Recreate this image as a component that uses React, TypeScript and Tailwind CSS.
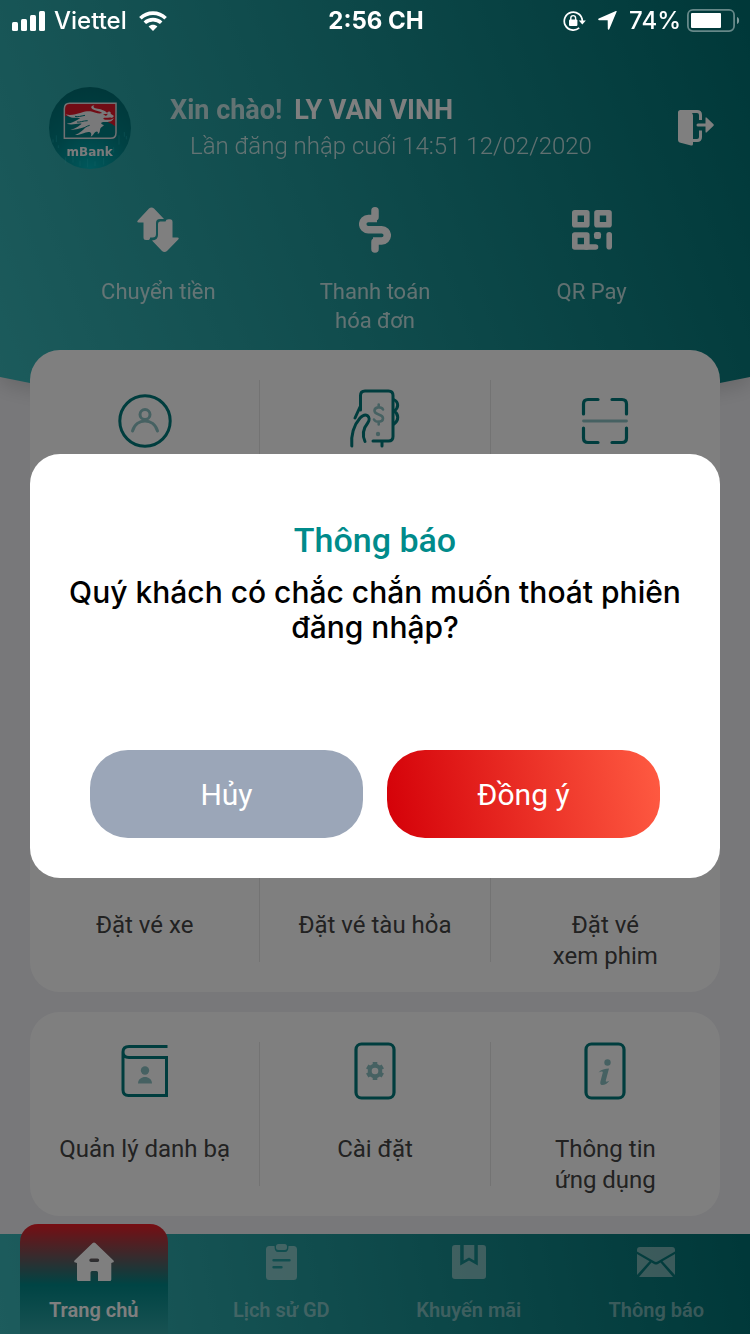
import type { ReactNode } from 'react';

function SignalIcon() {
  return (
    <svg width="34" height="20" viewBox="0 0 34 20" fill="white" aria-hidden="true">
      <rect x="0" y="11" width="6" height="9" rx="1.5" />
      <rect x="9" y="8" width="6" height="12" rx="1.5" />
      <rect x="18" y="4" width="6" height="16" rx="1.5" />
      <rect x="27" y="0" width="6" height="20" rx="1.5" />
    </svg>
  );
}

function WifiIcon() {
  return (
    <svg width="28" height="20" viewBox="0 0 28 20" fill="none" stroke="white" strokeWidth="3.6" aria-hidden="true">
      <path d="M1.4 7.2C8.4 .4 19.6 .4 26.6 7.2" />
      <path d="M5.8 11.8C10.4 7.5 17.6 7.5 22.2 11.8" />
      <path d="M14 20l-4.4-4.5c2.5-2.2 6.3-2.2 8.8 0z" fill="white" stroke="none" />
    </svg>
  );
}

function RotationLockIcon() {
  return (
    <svg width="23" height="20" viewBox="0 0 23 20" fill="none" stroke="white" aria-hidden="true">
      <path d="M19.3 10A9 9 0 1 0 16.2 16.9" strokeWidth="1.7" />
      <path d="M15.8 9.6h7l-3.5 4z" fill="white" stroke="none" />
      <rect x="6" y="8.6" width="8.4" height="6.4" rx="1" fill="white" stroke="none" />
      <path d="M7.8 9V7a2.4 2.4 0 0 1 4.8 0v2" strokeWidth="1.4" />
    </svg>
  );
}

function LocationIcon() {
  return (
    <svg width="19" height="19" viewBox="0 0 19 19" fill="white" aria-hidden="true">
      <path d="M18.6.8c.3-.6-.1-.9-.7-.7L.8 7.6c-.9.4-.7 1.6.3 1.6h8.2c.2 0 .4.2.4.4l.1 8.2c0 1 1.2 1.2 1.6.3z" />
    </svg>
  );
}

function BatteryIcon() {
  return (
    <svg width="53" height="23" viewBox="0 0 53 23" fill="none" aria-hidden="true">
      <rect x=".9" y=".9" width="46.2" height="21.2" rx="5" stroke="white" strokeOpacity=".4" strokeWidth="1.8" />
      <rect x="4" y="4" width="30" height="15" rx="1" fill="white" />
      <path d="M50 8c2.8.6 2.8 6.4 0 7z" fill="white" fillOpacity=".5" />
    </svg>
  );
}

function BankLogo() {
  return (
    <svg className="size-[82px] shrink-0" viewBox="12 15 246 246" role="img" aria-label="mBank">
      <defs>
        <radialGradient id="disc" cx="50%" cy="100%" r="100%">
          <stop offset="0" stopColor="#00b2b9" />
          <stop offset=".5" stopColor="#008388" />
          <stop offset="1" stopColor="#006f74" />
        </radialGradient>
      </defs>
      <circle cx="135" cy="138" r="123" fill="url(#disc)" />
      <path
        d="M24 172v10M34 160v20M40 190v8M62 226v18M84 212v30M105 236v16M128 230v26M150 238v14M176 228v20M206 196v16M222 160v28M238 150v14M244 162v10"
        stroke="#35d0d8"
        strokeOpacity=".45"
        strokeWidth="2"
      />
      <path d="M74 64H212V152Q212 169 196 169H58V81Q58 64 74 64Z" fill="#008185" />
      <path d="M74 64H212V134Q190 116 150 108L58 102V81Q58 64 74 64Z" fill="#e3192b" />
      <path
        d="M62 97C80 102 92 95 108 92C122 88 130 87 142 89C150 91 160 97 172 93C164 87 152 87 143 82C136 77 138 71 148 70C142 76 148 79 158 80C170 81 180 86 186 92C192 85 199 89 197 95L207 102L201 108C193 105 186 109 178 107C172 108 176 114 186 113C196 115 202 111 206 108C204 118 192 121 178 120C168 120 165 125 174 128C181 130 170 133 167 138C163 145 167 152 158 156C161 148 155 147 151 150C146 154 146 159 137 164C141 156 138 150 131 150C121 149 108 160 90 159C104 154 115 145 121 136C106 137 97 145 76 143C92 140 101 132 110 125C94 123 83 131 65 125C84 124 93 115 106 109C90 107 78 111 62 97Z"
        fill="#f2f2f4"
      />
      <path d="M174 97l15-2-6 7z" fill="#e3192b" />
      <path d="M120 100C108 102 98 106 90 103M128 116C114 116 104 122 96 120M134 130C124 132 116 140 108 142" fill="none" stroke="#008185" strokeWidth="3" />
      <path
        d="M74 64H213V152Q213 169 196 169H58V81Q58 64 74 64Z"
        fill="none"
        stroke="#e3e3e6"
        strokeWidth="4.5"
      />
      <text
        x="134"
        y="222"
        textAnchor="middle"
        fontFamily="'DejaVu Sans', sans-serif"
        fontWeight="700"
        fontSize="36"
        fill="#f5f5f6"
      >
        mBank
      </text>
    </svg>
  );
}

function LogoutIcon() {
  return (
    <svg width="36" height="36" viewBox="0 0 36 36" fill="none" stroke="white" strokeWidth="3" aria-hidden="true">
      <path d="M2.5 0H10l3.4 2.4Q15 3.5 15 5.5V34q0 2-2 1.5L1.6 32.4Q0 32 0 30V2.5Q0 0 2.5 0Z" fill="white" stroke="none" />
      <path d="M8 1.5h11q3.5 0 3.5 3.5v5M22.500 20.500V27q0 3.500-3.500 3.500h-4" />
      <path d="M20 15h9" strokeLinecap="round" />
      <path d="M27.500 8.500Q27.500 6.500 29 8l6.300 6q1 1 0 2L29 22q-1.500 1.500-1.500-.5z" fill="white" stroke="none" />
    </svg>
  );
}

function TransferIcon() {
  return (
    <svg width="42" height="46" viewBox="0 0 42 46" fill="white" aria-hidden="true">
      <path d="M12 1.600Q14.500-.6 17 1.600L27 12H23Q19 12 19 16V27Q19 30.500 15.500 30.500H13.200Q13 33.500 9.500 33H9Q6.500 33 6.500 30.500V15.500H1.600Q-.6 15.500 .8 13.500Z" />
      <path d="M21 17Q21 14.500 23 14.500H28.500Q29 12.300 31.500 12.300H33Q35.500 12.300 35.500 15V30.500H40.400Q42.600 30.500 41.200 32.500L30 44Q27.500 46.200 25 44L15 33.500Q21 33 21 28Z" />
    </svg>
  );
}

function DollarIcon() {
  return (
    <svg width="32" height="46" viewBox="0 0 32 46" fill="none" stroke="white" strokeWidth="7.5" aria-hidden="true">
      <path d="M16 3.800V10M16 35V42" strokeLinecap="round" />
      <path d="M18 11.500H9.300a5.600 5.600 0 0 0 0 11.200H22.700a5.600 5.600 0 0 1 0 11.200H14" />
    </svg>
  );
}

function QrIcon() {
  return (
    <svg width="40" height="40" viewBox="0 0 40 40" fill="none" stroke="white" strokeWidth="5.600" strokeLinejoin="round" aria-hidden="true">
      <rect x="2.800" y="2.800" width="12" height="12" />
      <rect x="25" y="2.800" width="12" height="12" />
      <rect x="2.800" y="25" width="12" height="12" />
      <path d="M14 37H23.500M37.200 24.800V36.800" strokeLinecap="round" />
      <rect x="22" y="22" width="7" height="7" rx="2.200" fill="white" stroke="none" />
    </svg>
  );
}

const teal = '#007b7c';
const soft = '#8dc3c5';

function AccountIcon() {
  return (
    <svg width="54" height="54" viewBox="0 0 54 54" fill="none" strokeWidth="3" strokeLinecap="round" aria-hidden="true">
      <circle cx="27" cy="27" r="25.200" stroke={teal} />
      <circle cx="27" cy="20.500" r="5" stroke={soft} />
      <path d="M14.500 37C18 23.500 36 23.500 39.500 37" stroke={soft} />
    </svg>
  );
}

function MobilePayIcon() {
  return (
    <svg width="52" height="60" viewBox="0 2 52 60" fill="none" stroke={teal} strokeWidth="3" strokeLinecap="round" strokeLinejoin="round" className="overflow-visible" aria-hidden="true">
      <path d="M11.500 21V6.500Q11.500 2 16 2H39.500Q44 2 44 6.500V47.500Q44 52 39.500 52H24" />
      <path d="M11 18L6 29" />
      <path d="M2.800 57C1.800 45 5 36 11 29C17 22.500 22.500 28 19 33.500C13 41 13.500 47 16 52.500" />
      <path d="M44.500 10.500C50 13 50 19 45 22C50 25 50 31.500 45 35M33 52.500V57" />
      <path d="M34 20.500C32.500 17.500 25.500 17.500 25.500 21.800C25.500 26.500 34 24.500 34 29.300C34 33.800 26.500 33.500 25 30.500M29.700 15.500V18.500M29.700 32.500V35.500" stroke={soft} strokeWidth="2.600" />
      <circle cx="29" cy="45" r="2.200" fill={soft} stroke="none" />
    </svg>
  );
}

function ScanIcon() {
  return (
    <svg width="48" height="48" viewBox="0 0 48 48" fill="none" stroke={teal} strokeWidth="3.200" strokeLinecap="round" aria-hidden="true">
      <path d="M2.500 17V7Q2.500 2.500 7 2.500H17M31 2.500H41Q45.500 2.500 45.500 7V17M45.500 31V41Q45.500 45.500 41 45.500H31M17 45.500H7Q2.500 45.500 2.500 41V31" />
      <path d="M2.500 24H45.500" stroke={soft} strokeWidth="2.800" />
    </svg>
  );
}

function ContactsIcon() {
  return (
    <svg width="48" height="54" viewBox="0 0 48 54" fill="none" stroke={teal} strokeWidth="3" aria-hidden="true">
      <path d="M46.500 2.500H8Q2 2.500 2 8Q2 13.500 8 13.500H45.500V51.500H7.500Q2 51.500 2 46V8" />
      <circle cx="24" cy="26.500" r="4.200" fill={soft} stroke="none" />
      <path d="M17 39.500C17 30.800 31 30.800 31 39.500Z" fill={soft} stroke="none" />
    </svg>
  );
}

function SettingsIcon() {
  return (
    <svg width="42" height="58" viewBox="0 0 42 58" fill="none" aria-hidden="true">
      <rect x="2" y="2" width="38" height="54" rx="5.500" stroke={teal} strokeWidth="3.200" />
      <circle cx="21" cy="29" r="5.300" stroke={soft} strokeWidth="4" />
      <path d="M21 20v3M21 35v3M13.200 24.500l2.600 1.500M26.200 32l2.600 1.500M13.200 33.500l2.600-1.500M26.200 26l2.600-1.500" stroke={soft} strokeWidth="4.600" />
    </svg>
  );
}

function InfoIcon() {
  return (
    <svg width="42" height="58" viewBox="0 0 42 58" fill="none" aria-hidden="true">
      <rect x="2" y="2" width="38" height="54" rx="5.500" stroke={teal} strokeWidth="3.200" />
      <circle cx="23.500" cy="20.500" r="3.200" fill={soft} />
      <path d="M14.500 30.500C17 27.500 21 26.500 25 26.500L21.800 38.500C21.500 40.500 24 39.500 25.500 38.500C23.500 42 19.500 43.500 17.500 43Q15.800 42.500 16.300 40L18.700 30.800C19 29 17 29.500 14.500 30.500Z" fill={soft} />
    </svg>
  );
}

function HomeIcon() {
  return (
    <svg width="40" height="40" viewBox="0 0 40 40" fill="white" aria-hidden="true">
      <path fillRule="evenodd" d="M18.700 1Q20 0 21.300 1L39.500 18.500Q40.500 20 38.500 20.600L37.300 21V37.500Q37.300 39 35.800 39H24V30.500Q24 29 22.500 29H18Q16.500 29 16.500 30.500V39H4.500Q3 39 3 37.500V21L1.500 20.600Q-.5 20 .5 18.500ZM17 16.500a1.500 1.500 0 0 0 0 3.400h6.500a1.500 1.500 0 0 0 0-3.400z" />
    </svg>
  );
}

function HistoryIcon() {
  return (
    <svg width="31" height="36" viewBox="0 0 31 36" fill="white" aria-hidden="true">
      <path fillRule="evenodd" d="M3.500 2H8.500Q8.500 8 12 8H19Q22.500 8 22.500 2H27.500Q31 2 31 5.500V32.500Q31 36 27.500 36H3.500Q0 36 0 32.500V5.500Q0 2 3.500 2ZM7.500 15a1.200 1.200 0 0 0 0 2.400h16a1.200 1.200 0 0 0 0-2.400zM7.500 22a1.200 1.200 0 0 0 0 2.400h8a1.200 1.200 0 0 0 0-2.400z" />
      <rect x="10" y="0" width="11" height="6" rx="2.500" />
    </svg>
  );
}

function PromotionIcon() {
  return (
    <svg width="34" height="34" viewBox="0 0 34 34" fill="white" aria-hidden="true">
      <path d="M3 0H8.200V20.500L17 15.500L25.800 20.500V0H31Q34 0 34 3V31Q34 34 31 34H3Q0 34 0 31V3Q0 0 3 0Z" />
      <path d="M11.700 0H22.300V15.500L17 12.500L11.700 15.500Z" />
    </svg>
  );
}

function MailIcon() {
  return (
    <svg width="38" height="30" viewBox="0 0 38 30" fill="white" aria-hidden="true">
      <path d="M3 0H35Q38 0 38 3V4.500L20.500 14.500Q19 15.300 17.500 14.500L0 4.500V3Q0 0 3 0Z" />
      <path d="M0 7L12.500 14.300L0 28ZM38 7L25.500 14.300L38 28ZM14.500 15.500L17 17Q19 18 21 17L23.500 15.500L36 30H2Z" />
    </svg>
  );
}

function Shortcut({ icon, label }: { icon: ReactNode; label: string }) {
  return (
    <button type="button" className="flex flex-1 flex-col items-center justify-start gap-[23px] text-[22px] leading-[29px] text-white/75">
      <span className="flex h-12 items-center">{icon}</span>
      <span className="h-[58px] whitespace-pre-line">{label}</span>
    </button>
  );
}

function Divider() {
  return <span className="my-[30px] w-px bg-[#e6e6e6]" />;
}

function Tile({ icon, label }: { icon: ReactNode; label: string }) {
  return (
    <button type="button" className="flex flex-1 basis-0 flex-col items-center justify-between">
      <span className="flex h-[60px] items-center">{icon}</span>
      <span className="h-[62px] whitespace-pre-line">{label}</span>
    </button>
  );
}

function NavItem({ icon, label, active = false }: { icon: ReactNode; label: string; active?: boolean }) {
  return (
    <a
      href="#"
      aria-current={active ? 'page' : undefined}
      className={
        active
          ? 'mx-5 -mt-[10px] flex flex-1 flex-col items-center rounded-t-[18px] bg-linear-to-b/srgb from-[#ee1c26] via-[#008888] via-55% to-[#31a5a6] pt-[18px] text-white'
          : 'flex flex-1 flex-col items-center px-5 pt-2 text-white/45'
      }
    >
      <span className={active ? 'flex h-10 items-center' : 'flex h-10 items-center opacity-45'}>{icon}</span>
      <span className="mt-4 leading-6 whitespace-nowrap">{label}</span>
    </a>
  );
}

export default function App() {
  return (
    <div className="flex min-h-screen flex-col bg-[#f1f1f5] font-['Roboto',sans-serif]">
      <div className="fixed inset-x-0 top-0 z-30 grid h-[41px] grid-cols-3 items-center pr-[10px] pl-3 font-['Inter',sans-serif] text-[24px] text-white">
        <div className="flex items-center gap-2 font-medium">
          <SignalIcon />
          <span>Viettel</span>
          <span className="pl-1"><WifiIcon /></span>
        </div>
        <div className="text-center font-bold">2:56 CH</div>
        <div className="flex items-center justify-end gap-1.5 font-medium">
          <RotationLockIcon />
          <span className="px-1.5"><LocationIcon /></span>
          <span>74%</span>
          <BatteryIcon />
        </div>
      </div>

      <div className="drop-shadow-[0_6px_10px_rgba(0,0,0,0.15)]">
        <header className="bg-linear-[70deg] from-[#3ab8ba] to-[#007072] pt-[87px] pb-[117px] [clip-path:polygon(0_0,100%_0,100%_377px,50%_100%,0_377px)]">
          <div className="flex items-center pr-9 pl-[49px]">
            <BankLogo />
            <div className="ml-[39px] flex-1 whitespace-nowrap">
              <p className="text-[27px] leading-9 font-bold text-white">
                <span className="mr-3 text-white/75">Xin chào!</span>LY VAN VINH
              </p>
              <p className="pl-5 text-[24px] leading-9 font-light text-white/75">Lần đăng nhập cuối 14:51 12/02/2020</p>
            </div>
            <button type="button" aria-label="Đăng xuất">
              <LogoutIcon />
            </button>
          </div>
          <div className="mt-[37px] flex px-[50px]">
            <Shortcut icon={<TransferIcon />} label="Chuyển tiền" />
            <Shortcut icon={<DollarIcon />} label={'Thanh toán\nhóa đơn'} />
            <Shortcut icon={<QrIcon />} label="QR Pay" />
          </div>
        </header>
      </div>

      <main className="relative -mt-[102px] flex flex-1 flex-col gap-5 px-[30px] pb-[18px] text-center text-[24px] leading-[31px] text-[#444]">
        <section className="flex min-h-[642px] rounded-[30px] bg-white *:[button]:pt-[41px] *:[button]:pb-5">
          <Tile icon={<AccountIcon />} label="Đặt vé xe" />
          <Divider />
          <Tile icon={<MobilePayIcon />} label="Đặt vé tàu hỏa" />
          <Divider />
          <Tile icon={<ScanIcon />} label={'Đặt vé\nxem phim'} />
        </section>
        <section className="flex min-h-[204px] rounded-[30px] bg-white *:[button]:pt-[29px] *:[button]:pb-5">
          <Tile icon={<ContactsIcon />} label="Quản lý danh bạ" />
          <Divider />
          <Tile icon={<SettingsIcon />} label="Cài đặt" />
          <Divider />
          <Tile icon={<InfoIcon />} label={'Thông tin\nứng dụng'} />
        </section>
      </main>

      <nav className="sticky bottom-0 grid h-[100px] grid-cols-4 bg-linear-[80deg] from-[#3ab8ba] to-[#007072] text-[20px] font-semibold *:flex">
        <div><NavItem icon={<HomeIcon />} label="Trang chủ" active /></div>
        <div><NavItem icon={<HistoryIcon />} label="Lịch sử GD" /></div>
        <div><NavItem icon={<PromotionIcon />} label="Khuyến mãi" /></div>
        <div><NavItem icon={<MailIcon />} label="Thông báo" /></div>
      </nav>

      <div className="fixed inset-0 z-20 flex items-center justify-center bg-black/50 px-[30px] pb-0.5">
        <div
          role="dialog"
          aria-modal="true"
          aria-labelledby="dialog-title"
          className="flex min-h-[424px] w-full flex-col rounded-[30px] bg-white px-[30px] pt-[66px] pb-10 text-center"
        >
          <h2 id="dialog-title" className="text-[34px] leading-10 font-medium text-[#008b8b]">
            Thông báo
          </h2>
          <p className="mt-[15px] font-['Inter',sans-serif] text-[30px] leading-[35px] font-medium text-black">
            Quý khách có chắc chắn muốn thoát phiên đăng nhập?
          </p>
          <div className="mt-auto flex gap-6 px-[30px] text-[30px] text-white">
            <button type="button" className="h-[88px] flex-1 rounded-[38px] bg-[#9ba6b8]">Hủy</button>
            <button type="button" className="h-[88px] flex-1 rounded-[38px] bg-linear-[80deg] from-[#d40008] to-[#ff5b42]">Đồng ý</button>
          </div>
        </div>
      </div>
    </div>
  );
}
